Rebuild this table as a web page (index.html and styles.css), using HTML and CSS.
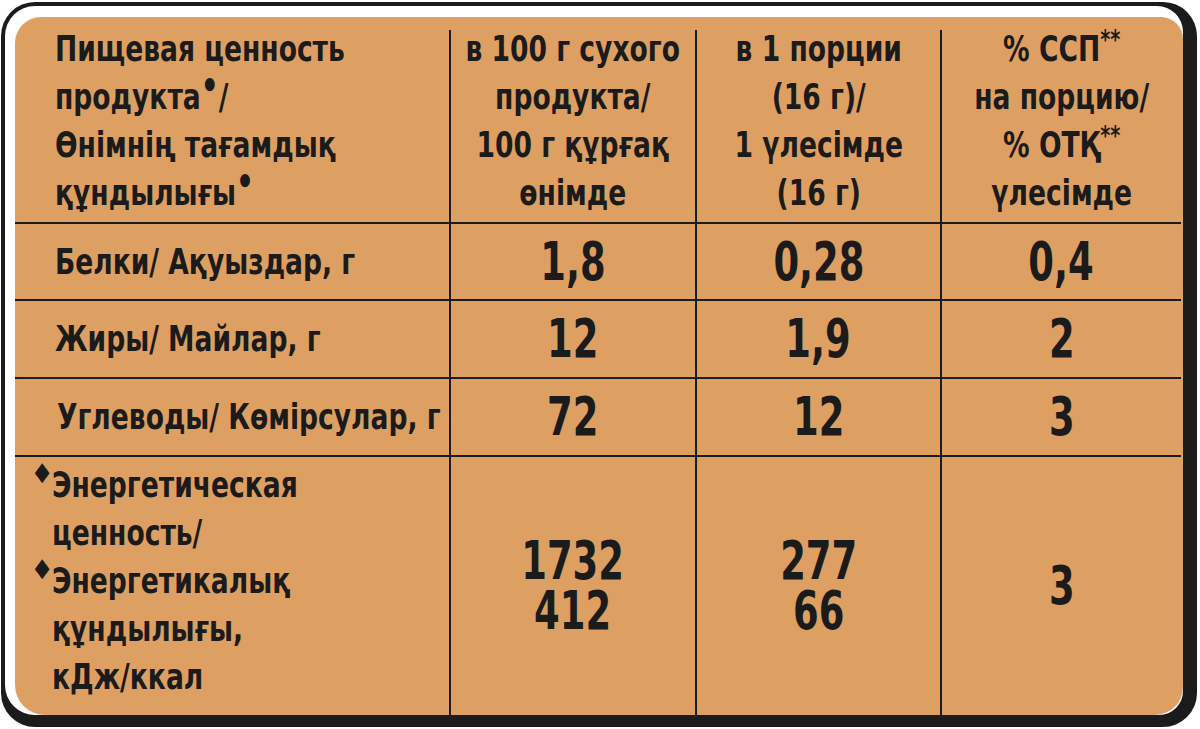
FILE: index.html
```html
<!DOCTYPE html>
<html lang="ru">
<head>
<meta charset="utf-8">
<link rel="stylesheet" href="styles.css">
</head>
<body>
<div class="frame">
  <div class="rim">
    <div class="panel">
      <div class="grid">
        <div class="cell head label"><div class="t">Пищевая ценность<br>продукта<span class="dot">•</span>/<br>Өнімнің тағамдық<br>құндылығы<span class="dot">•</span></div></div>
        <div class="cell head col"><div class="t">в 100 г сухого<br>продукта/<br>100 г құрғақ<br>өнімде</div></div>
        <div class="cell head col"><div class="t">в 1 порции<br>(16 г)/<br>1 үлесімде<br>(16 г)</div></div>
        <div class="cell head col"><div class="t">% ССП<span class="ast">**</span><br>на порцию/<br>% ОТҚ<span class="ast">**</span><br>үлесімде</div></div>

        <div class="cell label row"><div class="t">Белки/ Ақуыздар, г</div></div>
        <div class="cell col row num"><div class="n">1,8</div></div>
        <div class="cell col row num"><div class="n">0,28</div></div>
        <div class="cell col row num"><div class="n">0,4</div></div>

        <div class="cell label row"><div class="t">Жиры/ Майлар, г</div></div>
        <div class="cell col row num"><div class="n">12</div></div>
        <div class="cell col row num"><div class="n">1,9</div></div>
        <div class="cell col row num"><div class="n">2</div></div>

        <div class="cell label row shift"><div class="t">Углеводы/ Көмірсулар, г</div></div>
        <div class="cell col row num"><div class="n">72</div></div>
        <div class="cell col row num"><div class="n">12</div></div>
        <div class="cell col row num"><div class="n">3</div></div>

        <div class="cell label last energy"><div class="t"><span class="dia">◆</span>Энергетическая<br>ценность/<br><span class="dia">◆</span>Энергетикалық<br>құндылығы,<br>кДж/ккал</div></div>
        <div class="cell col last num"><div class="n">1732<br>412</div></div>
        <div class="cell col last num"><div class="n">277<br>66</div></div>
        <div class="cell col last num"><div class="n">3</div></div>
      </div>
    </div>
  </div>
</div>
</body>
</html>
```

FILE: styles.css
```css
html, body {
  margin: 0;
  padding: 0;
  background: #ffffff;
}
body {
  width: 1200px;
  height: 729px;
  overflow: hidden;
  font-family: "DejaVu Sans Condensed", "DejaVu Sans", sans-serif;
  font-stretch: condensed;
  font-weight: bold;
  color: #1b1b1b;
}
.frame {
  margin: 2px 0 0 1px;
  width: 1196px;
  height: 725px;
  box-sizing: border-box;
  background: #1b1b1b;
  border-radius: 34px;
  padding: 4px 14px 12px 4px;
}
.rim {
  height: 100%;
  box-sizing: border-box;
  background: #ffffff;
  border-radius: 30px 26px 24px 30px;
  padding: 11px 0 0 10px;
}
.panel {
  height: 100%;
  background: #dea062;
  border-radius: 26px 22px 28px 30px;
  overflow: hidden;
}
.grid {
  display: grid;
  grid-template-columns: 434px 246px 245px 1fr;
  grid-template-rows: 207px 77px 78px 78px 1fr;
  height: 100%;
  margin-right: 2px;
}
.cell {
  box-sizing: border-box;
  border-bottom: 2px solid #1b1b1b;
  font-size: 36px;
  line-height: 48px;
  min-width: 0;
}
.cell.last {
  border-bottom: none;
}
.t {
  display: inline-block;
  white-space: nowrap;
  transform: scaleX(0.82);
}
.label .t {
  transform-origin: left center;
}
.col .t {
  transform-origin: center center;
}
.head.col .t {
  margin-top: -5px;
}
.n {
  white-space: nowrap;
  transform: scaleX(0.76);
  transform-origin: center center;
}
.col {
  border-left: 2px solid #1b1b1b;
  text-align: center;
  display: flex;
  flex-direction: column;
  justify-content: center;
  align-items: center;
}
.head.col {
  margin-top: 13px;
  justify-content: flex-start;
}
.head.label {
  padding-left: 40px;
  padding-top: 8px;
}
.label.row {
  display: flex;
  align-items: center;
  padding-left: 40px;
}
.label.shift {
  padding-left: 42px;
}
.num {
  font-size: 54px;
  line-height: 50px;
}
.energy {
  padding-left: 37px;
  padding-top: 4px;
}
.dia {
  display: inline-block;
  width: 20px;
  margin-left: -21px;
  margin-right: 1px;
  font-size: 26px;
  line-height: 16px;
  vertical-align: 17px;
  font-family: "DejaVu Sans", sans-serif;
}
.dot {
  font-size: 38px;
  vertical-align: 10px;
  line-height: 0;
  font-family: "DejaVu Sans", sans-serif;
}
.ast {
  font-size: 26px;
  vertical-align: 12px;
  line-height: 0;
}
```
